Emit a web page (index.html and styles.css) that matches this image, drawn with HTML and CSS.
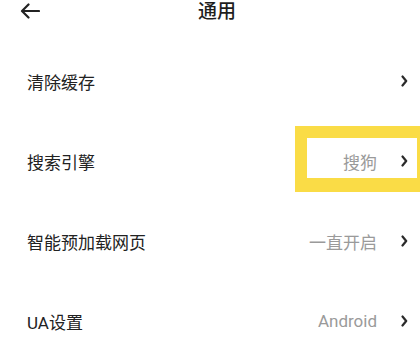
FILE: index.html
```html
<!DOCTYPE html>
<html lang="zh-CN">
<head>
<meta charset="UTF-8">
<meta name="viewport" content="width=device-width, initial-scale=1.0">
<title>通用</title>
<link rel="stylesheet" href="styles.css">
</head>
<body>
    <header class="cabecera">
        <button class="volver" aria-label="返回">
            <svg width="20" height="16" viewBox="0 0 20 16">
                <path d="M19 8H2.5M8.5 1.5L2 8l6.5 6.5" fill="none" stroke="#222" stroke-width="2.2" stroke-linecap="round" stroke-linejoin="round"/>
            </svg>
        </button>
        <h1 class="titulo">通用</h1>
    </header>

    <!-- Lista de ajustes -->
    <ul class="lista">
        <li class="fila">
            <span class="etiqueta">清除缓存</span>
            <span class="flecha"><svg width="7" height="12" viewBox="0 0 7 12"><path d="M1.5 1.5L5.2 6l-3.7 4.5" fill="none" stroke="#2a2a2a" stroke-width="2.2" stroke-linecap="round" stroke-linejoin="round"/></svg></span>
        </li>
        <li class="fila">
            <span class="etiqueta">搜索引擎</span>
            <span class="valor">搜狗</span>
            <span class="flecha"><svg width="7" height="12" viewBox="0 0 7 12"><path d="M1.5 1.5L5.2 6l-3.7 4.5" fill="none" stroke="#2a2a2a" stroke-width="2.2" stroke-linecap="round" stroke-linejoin="round"/></svg></span>
            <div class="marca"></div>
        </li>
        <li class="fila">
            <span class="etiqueta">智能预加载网页</span>
            <span class="valor">一直开启</span>
            <span class="flecha"><svg width="7" height="12" viewBox="0 0 7 12"><path d="M1.5 1.5L5.2 6l-3.7 4.5" fill="none" stroke="#2a2a2a" stroke-width="2.2" stroke-linecap="round" stroke-linejoin="round"/></svg></span>
        </li>
        <li class="fila">
            <span class="etiqueta">UA设置</span>
            <span class="valor">Android</span>
            <span class="flecha"><svg width="7" height="12" viewBox="0 0 7 12"><path d="M1.5 1.5L5.2 6l-3.7 4.5" fill="none" stroke="#2a2a2a" stroke-width="2.2" stroke-linecap="round" stroke-linejoin="round"/></svg></span>
        </li>
    </ul>
</body>
</html>
```
FILE: styles.css
```css
* {
    box-sizing: border-box;
}

body {
    margin: 0;
    padding: 0;
    background-color: #fff;
    font-family: Roboto, "Noto Sans CJK SC", sans-serif;
    color: #222;
    overflow: hidden;
}

/* Barra superior */
.cabecera {
    position: relative;
    height: 24px;
    display: flex;
    align-items: center;
    justify-content: center;
}

.volver {
    position: absolute;
    left: 20px;
    top: 3px;
    padding: 0;
    border: none;
    background: none;
    display: flex;
}

.titulo {
    margin: 0;
    font-size: 19px;
    font-weight: 500;
    line-height: 24px;
    color: #1e1e1e;
    transform: translateX(7px);
}

/* Lista */
.lista {
    list-style: none;
    margin: 17px 0 0 0;
    padding: 0;
}

.fila {
    position: relative;
    height: 80px;
    display: flex;
    align-items: center;
    padding: 0 12px 0 27px;
    font-size: 17px;
}

.etiqueta {
    flex: 1;
    color: #222;
}

.valor {
    color: #9a9a9a;
    margin-right: 24px;
}

.flecha {
    display: flex;
    width: 7px;
}

/* Recuadro amarillo de resaltado */
.marca {
    position: absolute;
    left: 295px;
    top: 5px;
    width: 125px;
    height: 66px;
    border-style: solid;
    border-color: #fadc46;
    border-width: 12px 3px 14px 12px;
}
```
